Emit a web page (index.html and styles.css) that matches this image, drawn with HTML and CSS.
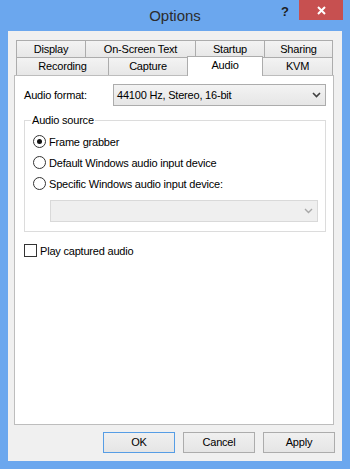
FILE: index.html
```html
<!DOCTYPE html>
<html>
<head>
<meta charset="utf-8">
<link rel="stylesheet" href="styles.css">
</head>
<body>
<div class="window">
  <div class="titlebar">
    <div></div>
    <div class="title">Options</div>
    <div class="controls">
      <span class="help">?</span>
      <span class="close"><svg width="9" height="9" viewBox="0 0 9 9"><path d="M1 1 L8 8 M8 1 L1 8" stroke="#fff" stroke-width="2" fill="none"/></svg></span>
    </div>
  </div>
  <div class="client">
    <div class="tabs">
      <div class="tabrow r1">
        <div class="tab w70">Display</div>
        <div class="tab w111">On-Screen Text</div>
        <div class="tab w70">Startup</div>
        <div class="tab w69">Sharing</div>
      </div>
      <div class="tabrow r2">
        <div class="tab w93">Recording</div>
        <div class="tab w80">Capture</div>
        <div class="tab w76 sel">Audio</div>
        <div class="tab w71">KVM</div>
      </div>
    </div>
    <div class="panel">
      <div class="fmt-row">
        <span class="fmt-label">Audio format:</span>
        <div class="select">
          <span>44100 Hz, Stereo, 16-bit</span>
          <svg width="9" height="6" viewBox="0 0 9 6"><path d="M1 1 L4.5 4.5 L8 1" stroke="#404040" stroke-width="1.6" fill="none"/></svg>
        </div>
      </div>
      <div class="group">
        <div class="legend">Audio source</div>
        <div class="radios">
          <div class="radio-row"><span class="radio on"></span><span>Frame grabber</span></div>
          <div class="radio-row"><span class="radio"></span><span>Default Windows audio input device</span></div>
          <div class="radio-row"><span class="radio"></span><span>Specific Windows audio input device:</span></div>
        </div>
        <div class="combo-dis">
          <svg width="9" height="6" viewBox="0 0 9 6"><path d="M1 1 L4.5 4.5 L8 1" stroke="#a8a8a8" stroke-width="1.4" fill="none"/></svg>
        </div>
      </div>
      <div class="check-row"><span class="checkbox"></span><span>Play captured audio</span></div>
    </div>
    <div class="buttons">
      <div class="btn default">OK</div>
      <div class="btn">Cancel</div>
      <div class="btn">Apply</div>
    </div>
  </div>
</div>
</body>
</html>
```
FILE: styles.css
```css
body {
  margin: 0;
  width: 350px;
  height: 469px;
  overflow: hidden;
  font-family: "Liberation Sans", Arial, sans-serif;
  font-size: 11px;
  letter-spacing: -0.2px;
  color: #000;
}
.window {
  width: 350px;
  height: 469px;
  background: #6ba7ee;
  display: flex;
  flex-direction: column;
}
.titlebar {
  height: 31px;
  display: grid;
  grid-template-columns: 1fr auto 1fr;
}
.title {
  font-size: 15px;
  letter-spacing: 0;
  color: #2c2c2c;
  line-height: 31px;
}
.controls {
  display: flex;
  justify-content: flex-end;
  align-items: flex-start;
}
.help {
  font-weight: bold;
  font-size: 13px;
  line-height: 15px;
  margin: 4px 10px 0 0;
  color: #1e1e1e;
  letter-spacing: 0;
}
.close {
  width: 44px;
  height: 20px;
  background: #c75050;
  margin-right: 7px;
  display: flex;
  align-items: center;
  justify-content: center;
}
.client {
  margin: 0 8px;
  height: 430px;
  box-sizing: border-box;
  background: #f0f0f0;
  padding: 9px 8px 0 6px;
  display: flex;
  flex-direction: column;
}
.tabs {
  margin-left: 2px;
}
.tabrow {
  display: flex;
  align-items: flex-start;
}
.tab {
  box-sizing: border-box;
  border: 1px solid #acacac;
  border-bottom: none;
  background: linear-gradient(#f3f3f3, #e7e7e7);
  text-align: center;
  margin-left: -1px;
}
.tab:first-child {
  margin-left: 0;
}
.r1 .tab {
  height: 17px;
  line-height: 16px;
}
.r2 .tab {
  height: 18px;
  line-height: 17px;
}
.r2 .tab.sel {
  background: #fff;
  height: 20px;
  line-height: 16px;
  margin-top: -1px;
  margin-bottom: -1px;
  position: relative;
  z-index: 1;
}
.w69 { width: 69px; }
.w70 { width: 70px; }
.w71 { width: 71px; }
.w76 { width: 76px; }
.w80 { width: 80px; }
.w93 { width: 93px; }
.w111 { width: 111px; }
.panel {
  box-sizing: border-box;
  height: 350px;
  border: 1px solid #bdbdbd;
  background: #fff;
  padding: 8px 7px 0 9px;
}
.fmt-row {
  display: flex;
  align-items: center;
  height: 22px;
}
.fmt-label {
  width: 89px;
}
.select {
  box-sizing: border-box;
  width: 213px;
  height: 22px;
  border: 1px solid #acacac;
  background: linear-gradient(#f3f3f3, #e6e6e6);
  display: flex;
  align-items: center;
  justify-content: space-between;
  padding: 0 4px 0 3px;
}
.group {
  margin-top: 14px;
  border: 1px solid #dcdcdc;
  padding: 0 7px 9px 8px;
}
.legend {
  width: fit-content;
  margin: -7px 0 0 -2px;
  padding: 0 1px;
  background: #fff;
  line-height: 13px;
}
.radios {
  margin-top: 4px;
}
.radio-row {
  display: flex;
  align-items: center;
  height: 21px;
  gap: 3px;
}
.radio {
  box-sizing: border-box;
  width: 13px;
  height: 13px;
  border-radius: 50%;
  border: 1px solid #333;
  background: #fff;
  display: flex;
  align-items: center;
  justify-content: center;
}
.radio.on::after {
  content: "";
  width: 5px;
  height: 5px;
  border-radius: 50%;
  background: #111;
}
.combo-dis {
  box-sizing: border-box;
  margin: 6px 0 0 17px;
  height: 22px;
  border: 1px solid #d9d9d9;
  background: #efefef;
  display: flex;
  align-items: center;
  justify-content: flex-end;
  padding-right: 4px;
}
.check-row {
  margin-top: 12px;
  display: flex;
  align-items: center;
  height: 13px;
  gap: 3px;
}
.checkbox {
  box-sizing: border-box;
  width: 13px;
  height: 13px;
  border: 1px solid #333;
  background: #fff;
}
.buttons {
  display: flex;
  justify-content: flex-end;
  gap: 8px;
  margin-top: 7px;
  margin-right: -1px;
}
.btn {
  box-sizing: border-box;
  width: 72px;
  height: 21px;
  border: 1px solid #acacac;
  background: linear-gradient(#f0f0f0, #e5e5e5);
  text-align: center;
  line-height: 19px;
}
.btn.default {
  border-color: #569de5;
}
```
